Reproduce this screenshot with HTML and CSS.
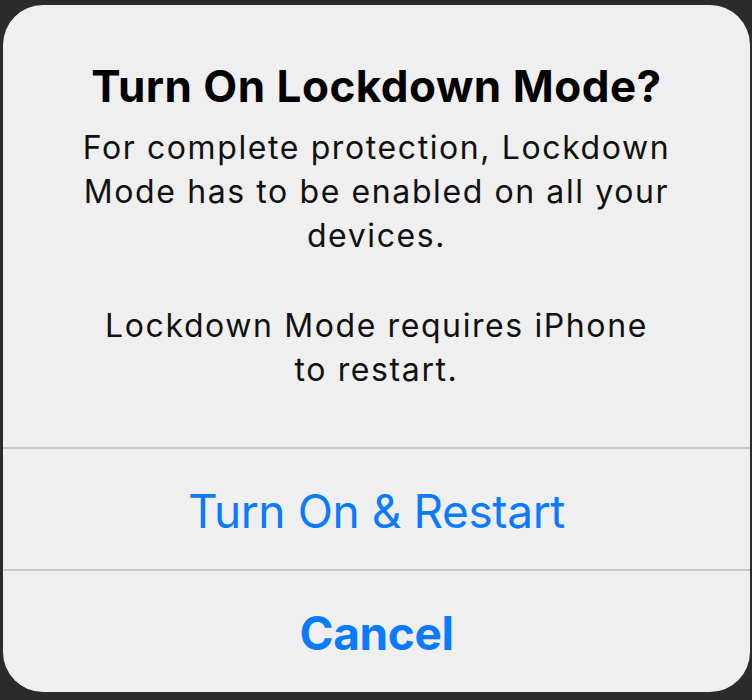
FILE: index.html
```html
<!DOCTYPE html>
<html lang="en">
<head>
<meta charset="utf-8">
<title>Turn On Lockdown Mode?</title>
<link rel="stylesheet" href="styles.css">
</head>
<body>
<div class="alert">
  <div class="alert-content">
    <h1 class="alert-title">Turn On Lockdown Mode?</h1>
    <p class="alert-message">For complete protection, Lockdown<br>Mode has to be enabled on all your<br>devices.</p>
    <p class="alert-message">Lockdown Mode requires iPhone<br>to restart.</p>
  </div>
  <button class="alert-action">Turn On &amp; Restart</button>
  <button class="alert-action alert-action-bold">Cancel</button>
</div>
</body>
</html>
```
FILE: styles.css
```css
html, body {
  margin: 0;
  padding: 0;
  background: #2b2b2b;
}
body {
  width: 752px;
  height: 700px;
  padding: 5px 2px 8px 3px;
  box-sizing: border-box;
  font-family: Inter, "Noto Sans", sans-serif;
}
.alert {
  background: #efefef;
  border-radius: 40px;
  height: 687px;
  display: flex;
  flex-direction: column;
  overflow: hidden;
}
.alert-content {
  height: 442px;
  box-sizing: border-box;
  padding: 59px 10px 0;
  text-align: center;
}
.alert-title {
  margin: 0 0 18px;
  font-size: 44px;
  line-height: 44px;
  font-weight: 700;
  letter-spacing: 0.5px;
  color: #000;
}
.alert-message {
  margin: 0 0 46px;
  font-size: 32px;
  line-height: 44px;
  font-weight: 400;
  letter-spacing: 1.6px;
  white-space: nowrap;
  color: #111;
}
.alert-action {
  display: block;
  width: 100%;
  height: 122px;
  border: 0;
  border-top: 2px solid #c8c8c8;
  background: transparent;
  padding: 4px 0 0;
  font-family: inherit;
  font-size: 46px;
  font-weight: 400;
  letter-spacing: -0.4px;
  color: #0a7aff;
  text-align: center;
}
.alert-action-bold {
  font-weight: 700;
}
```
